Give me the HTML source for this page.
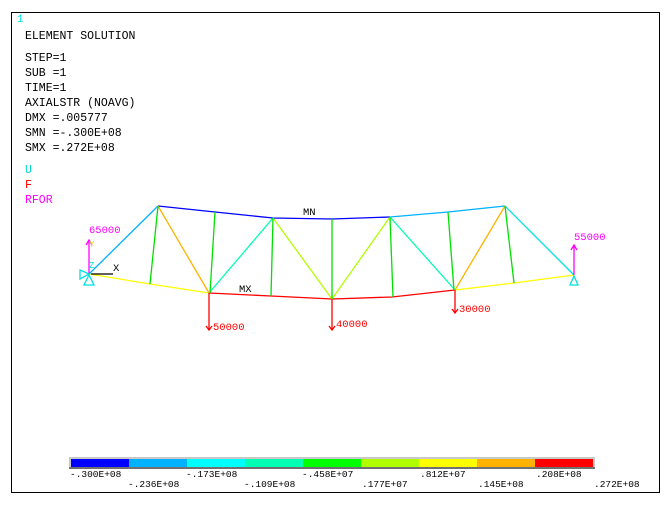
<!DOCTYPE html><html><head><style>
body{margin:0;background:#fff;width:672px;height:514px;overflow:hidden}
svg text{font-family:"Liberation Mono",monospace}
</style></head><body>
<svg width="672" height="514" viewBox="0 0 672 514">
<rect x="11.5" y="12.5" width="648" height="480" fill="#fff" stroke="#000"/>
<g font-size="11.5" fill="#000">
<text x="17" y="22" fill="#00e0e0" font-size="11">1</text>
<text x="25" y="39">ELEMENT SOLUTION</text>
<text x="25" y="61">STEP=1</text>
<text x="25" y="76">SUB =1</text>
<text x="25" y="91">TIME=1</text>
<text x="25" y="106">AXIALSTR (NOAVG)</text>
<text x="25" y="121">DMX =.005777</text>
<text x="25" y="136">SMN =-.300E+08</text>
<text x="25" y="151">SMX =.272E+08</text>
<text x="25" y="173" fill="#00d8d8">U</text>
<text x="25" y="188" fill="#ff0000">F</text>
<text x="25" y="203" fill="#ff00ff">RFOR</text>
</g>
<g stroke-width="1.3" fill="none">
<polyline points="158,206 215,212 273,218 332,219 390,217" stroke="#0000ff"/>
<polyline points="390,217 448,212 505,206" stroke="#00b2ff"/>
<polyline points="89,274 150,284 209,293" stroke="#ffff00"/>
<polyline points="209,293 271,296 332,299 392,297 455,290" stroke="#ff0000"/>
<polyline points="455,290 514,283 574,275" stroke="#ffff00"/>
<line x1="89" y1="274" x2="158" y2="206" stroke="#00b2ff"/>
<line x1="158" y1="206" x2="209" y2="293" stroke="#ffb200"/>
<line x1="209" y1="293" x2="273" y2="218" stroke="#00ffb2"/>
<line x1="273" y1="218" x2="332" y2="299" stroke="#b2ff00"/>
<line x1="332" y1="299" x2="390" y2="217" stroke="#b2ff00"/>
<line x1="390" y1="217" x2="455" y2="290" stroke="#00ffb2"/>
<line x1="455" y1="290" x2="505" y2="206" stroke="#ffb200"/>
<line x1="505" y1="206" x2="574" y2="275" stroke="#00e0e0"/>
<g stroke="#00e000">
<line x1="158" y1="206" x2="150" y2="284"/>
<line x1="215" y1="212" x2="210" y2="293"/>
<line x1="273" y1="218" x2="271" y2="296"/>
<line x1="332" y1="219" x2="332" y2="299"/>
<line x1="390" y1="217" x2="393" y2="297"/>
<line x1="448" y1="212" x2="454" y2="290"/>
<line x1="505" y1="206" x2="514" y2="283"/>
</g>
<g stroke="#ff0000">
<line x1="209" y1="293" x2="209" y2="330"/><line x1="332" y1="299" x2="332" y2="330"/><line x1="455" y1="290" x2="455" y2="312"/>
<polyline points="206,326 209,330 212,326"/><polyline points="329,326 332,330 335,326"/><polyline points="452,309 455,313 458,309"/>
</g>
<g stroke="#ff00ff"><line x1="89" y1="274" x2="89" y2="240"/><polyline points="86,245 89,240 92,245"/>
<line x1="574" y1="275" x2="574" y2="245"/><polyline points="571,250 574,245 577,250"/></g>
<line x1="91" y1="274" x2="113" y2="274" stroke="#000"/>
<polygon points="89,275 84,285 94,285" stroke="#00e0e0"/>
<polygon points="89,274 80,270 80,279" stroke="#00e0e0"/>
<polygon points="574,276 570,285 578,285" stroke="#00e0e0"/>
</g>
<g font-size="10.5">
<text x="89" y="233" fill="#ff00ff">65000</text>
<text x="574" y="240" fill="#ff00ff">55000</text>
<text x="213" y="330" fill="#ff0000">50000</text>
<text x="336" y="327" fill="#ff0000">40000</text>
<text x="459" y="312" fill="#ff0000">30000</text>
<text x="303" y="215" fill="#000">MN</text>
<text x="239" y="292" fill="#000">MX</text>
<text x="113" y="271" fill="#000">X</text>
<text x="89" y="247" fill="#e0e000" font-size="9">Y</text>
<text x="89" y="268" fill="#00e0e0" font-size="9">Z</text>
</g>
<rect x="69" y="457" width="526" height="12" fill="#c8c8c8"/>
<rect x="69" y="467" width="526" height="2" fill="#707070"/>
<g>
<rect x="71" y="459" width="58" height="8" fill="#0000ff"/>
<rect x="129" y="459" width="58" height="8" fill="#00b2ff"/>
<rect x="187" y="459" width="58" height="8" fill="#00ffff"/>
<rect x="245" y="459" width="58" height="8" fill="#00ffb2"/>
<rect x="303" y="459" width="58" height="8" fill="#00ff00"/>
<rect x="361" y="459" width="58" height="8" fill="#b2ff00"/>
<rect x="419" y="459" width="58" height="8" fill="#ffff00"/>
<rect x="477" y="459" width="58" height="8" fill="#ffb200"/>
<rect x="535" y="459" width="58" height="8" fill="#ff0000"/>
</g>
<g font-size="9.5" fill="#000">
<text x="70" y="477">-.300E+08</text>
<text x="128" y="487">-.236E+08</text>
<text x="186" y="477">-.173E+08</text>
<text x="244" y="487">-.109E+08</text>
<text x="302" y="477">-.458E+07</text>
<text x="362" y="487">.177E+07</text>
<text x="420" y="477">.812E+07</text>
<text x="478" y="487">.145E+08</text>
<text x="536" y="477">.208E+08</text>
<text x="594" y="487">.272E+08</text>
</g>
</svg>
</body></html>
